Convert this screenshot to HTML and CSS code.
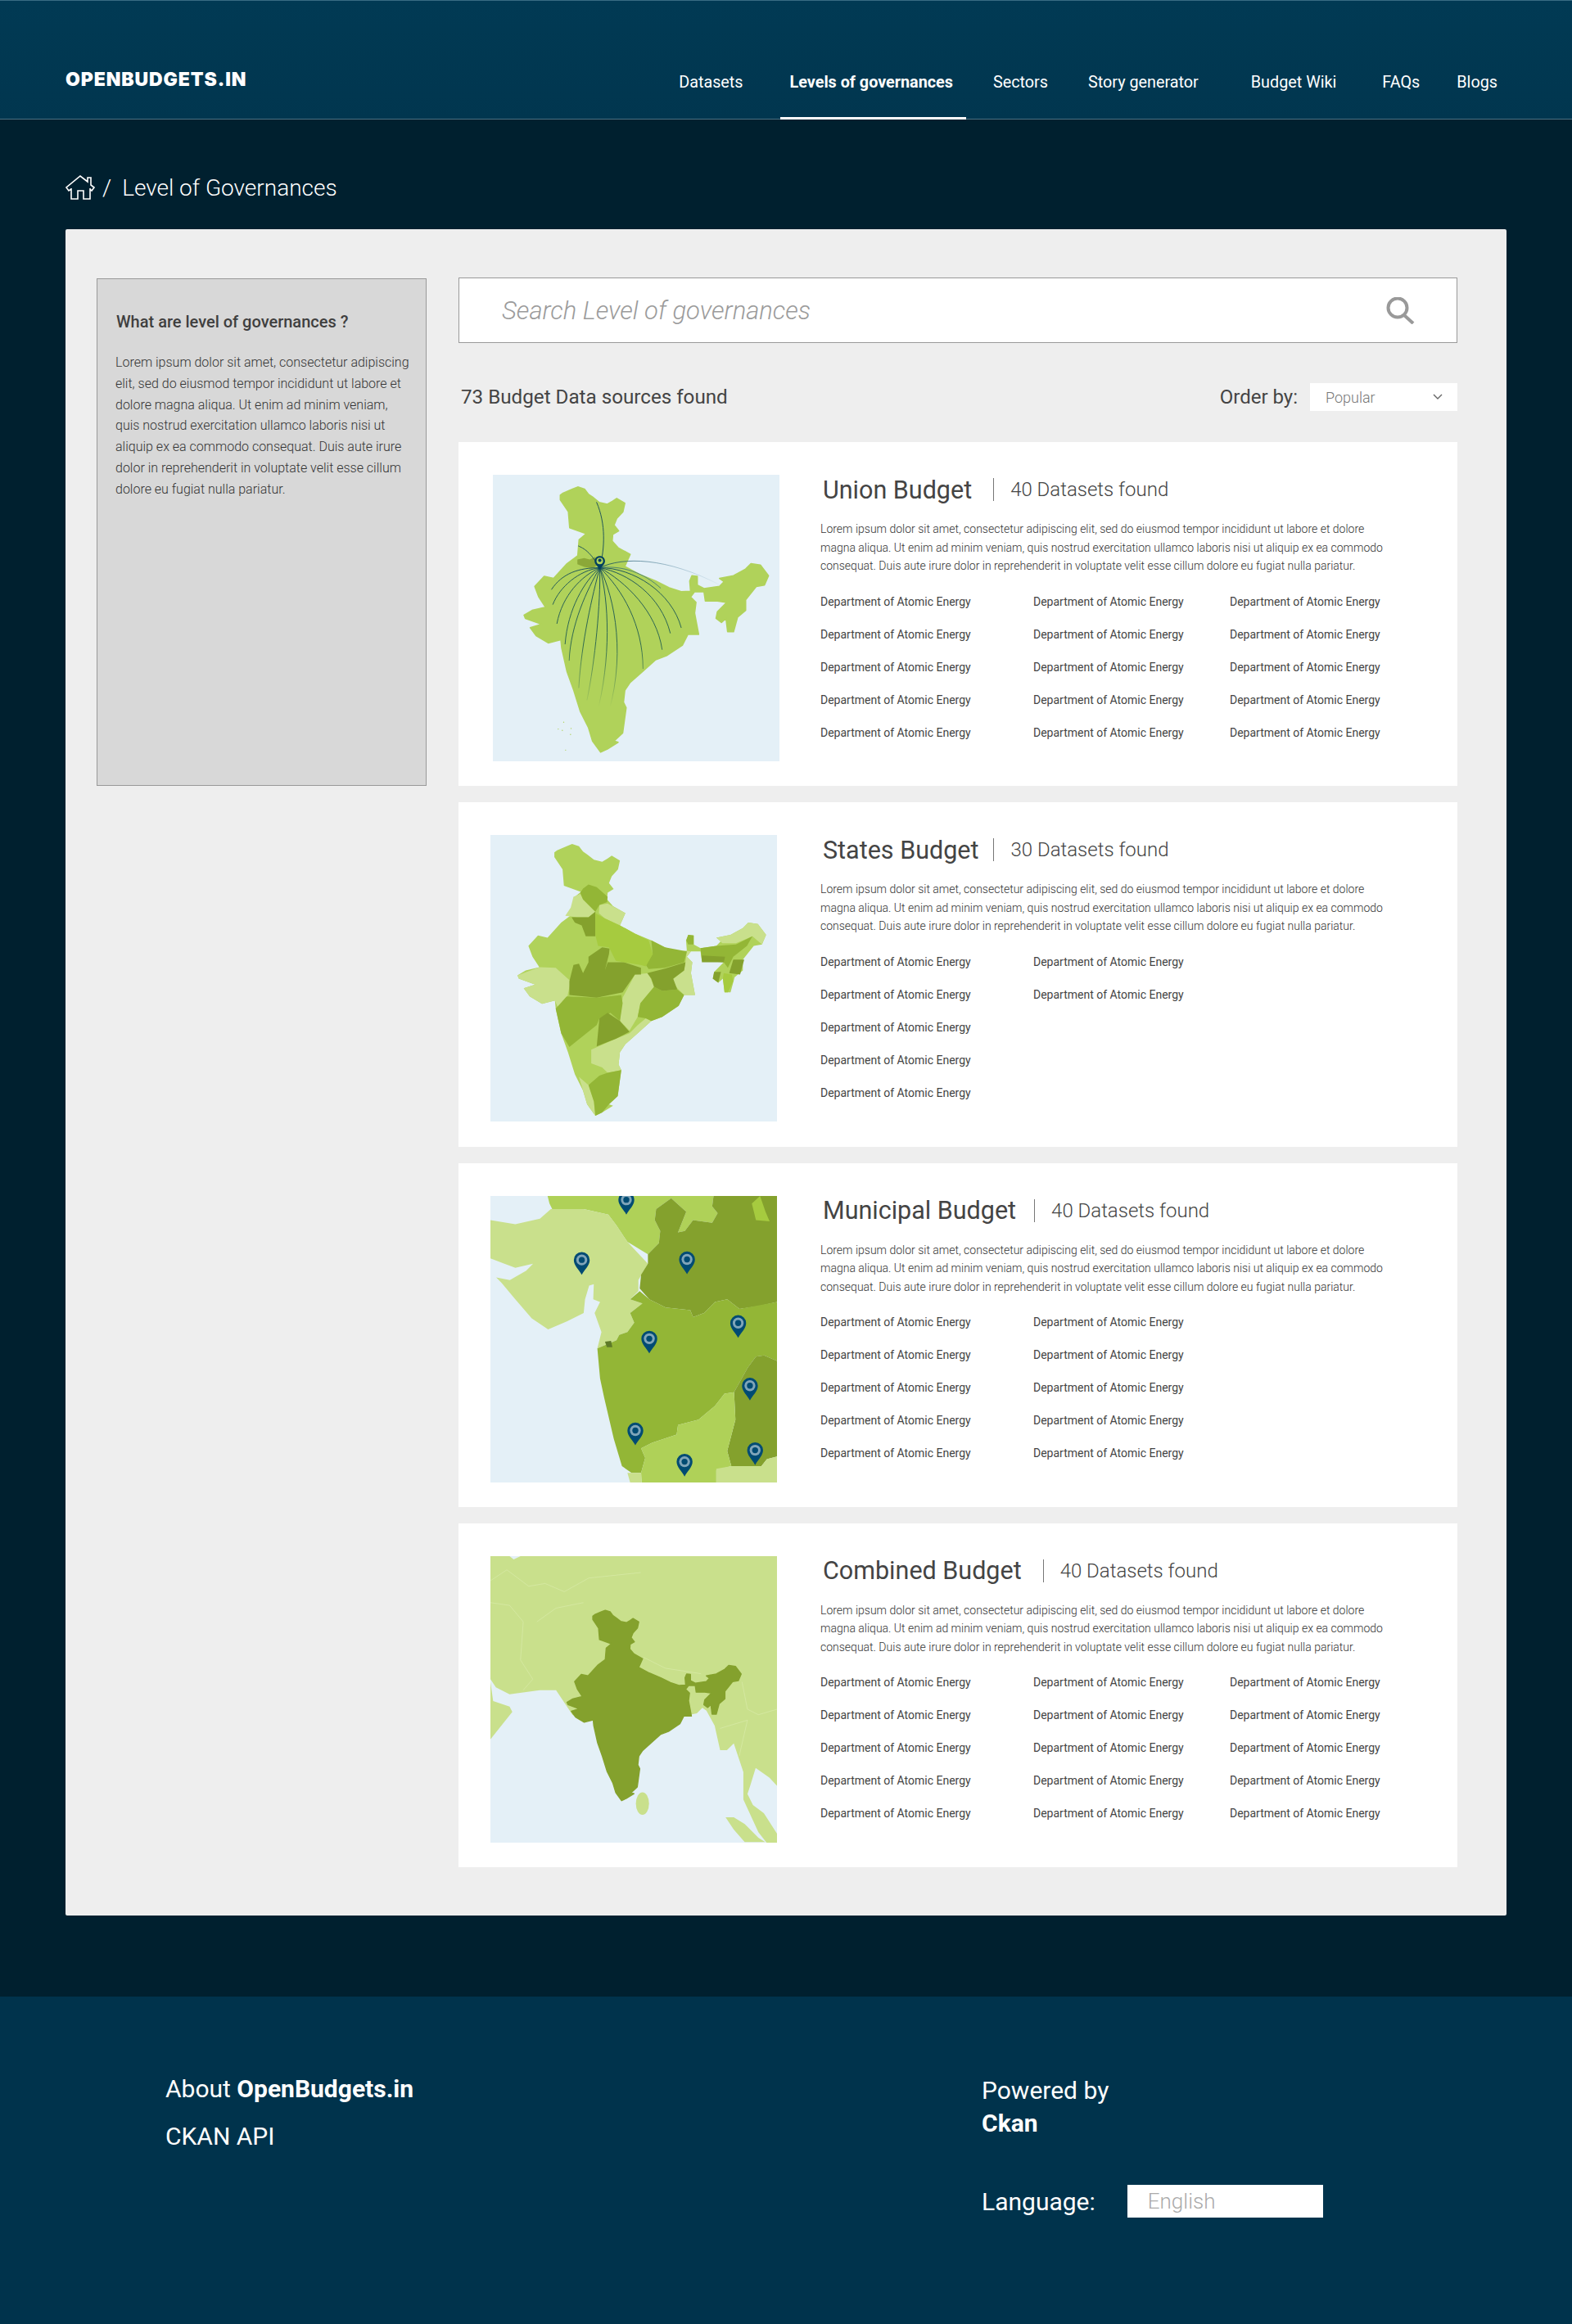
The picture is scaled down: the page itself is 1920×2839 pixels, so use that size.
FILE: index.html
```html
<!DOCTYPE html>
<html lang="en">
<head>
    <meta charset="UTF-8">
    <meta name="viewport" content="width=device-width, initial-scale=1.0">
    <title>Level of Governances</title>
    <link rel="stylesheet" href="styles.css">
</head>
<body>
    <!-- shared map shapes -->
    <svg class="defs" width="0" height="0">
        <defs>
            <path id="india" d="M295 128 305 120 340 105 360 97 385 105 400 125 415 135 440 155 470 162 490 150 505 140 535 158 528 190 505 215 495 240 512 262 490 275 488 300 510 325 555 350 535 395 590 425 650 450 700 475 745 490 780 488 777 450 785 430 805 432 805 465 830 478 888 470 905 452 888 440 940 430 985 405 1005 385 1040 390 1070 430 1055 465 1025 470 985 520 985 560 955 585 940 640 918 640 912 590 895 605 875 590 880 565 915 530 880 525 835 525 830 490 795 490 780 510 800 530 795 570 810 650 770 650 750 690 690 730 650 745 600 790 555 830 535 860 530 905 540 925 527 1020 495 1050 510 1055 470 1080 445 1092 415 1050 400 1000 370 940 345 860 320 790 300 700 297 670 250 682 205 655 183 625 225 612 165 590 160 578 190 560 240 548 215 510 200 470 235 432 270 440 320 385 360 355 365 295 392 272 330 250 325 190 295 145Z"/>
            <g id="pin">
                <path d="M0 0a29 29 0 0 1 29 29c0 20-19 35-29 54-10-19-29-34-29-54A29 29 0 0 1 0 0z" fill="#004b73"/>
                <circle cy="29" r="20" fill="#fff" fill-opacity=".5"/>
                <circle cy="29" r="11" fill="#004b73"/>
            </g>
            <linearGradient id="fade" gradientUnits="userSpaceOnUse" x1="0" y1="490" x2="0" y2="1000">
                <stop offset="0" stop-color="#0b4558"/>
                <stop offset=".55" stop-color="#1c5a4c"/>
                <stop offset="1" stop-color="#1c5a4c" stop-opacity="0"/>
            </linearGradient>
            <linearGradient id="fadeEast" gradientUnits="userSpaceOnUse" x1="517" y1="0" x2="980" y2="0">
                <stop offset="0" stop-color="#0b4558"/>
                <stop offset="1" stop-color="#4d87a8" stop-opacity="0"/>
            </linearGradient>
        </defs>
    </svg>

    <header class="topbar">
        <a class="logo" href="#">OPENBUDGETS.IN</a>
        <nav class="nav">
            <a href="#">Datasets</a>
            <a class="active" href="#">Levels of governances</a>
            <a href="#">Sectors</a>
            <a href="#">Story generator</a>
            <a href="#">Budget Wiki</a>
            <a href="#">FAQs</a>
            <a href="#">Blogs</a>
        </nav>
    </header>

    <main class="main">
        <div class="crumbs">
            <svg class="home-icon" viewBox="0 0 36 30" width="36" height="30">
                <path d="M7 16v13h8V19h7v10h8V16M7 17l-3 2-3-4L18 1l9 7V3h4v9l4 3-3 4-2-2"/>
            </svg>
            <span class="crumb-sep">/</span>
            <span>Level of Governances</span>
        </div>

        <div class="panel">
            <aside class="sidebar">
                <h4>What are level of governances ?</h4>
                <p>Lorem ipsum dolor sit amet, consectetur adipiscing elit, sed do eiusmod tempor incididunt ut labore et dolore magna aliqua. Ut enim ad minim veniam, quis nostrud exercitation ullamco laboris nisi ut aliquip ex ea commodo consequat. Duis aute irure dolor in reprehenderit in voluptate velit esse cillum dolore eu fugiat nulla pariatur.</p>
            </aside>

            <section class="content">
                <div class="search">
                    <span>Search Level of governances</span>
                    <svg viewBox="0 0 36 33" width="36" height="33">
                        <circle cx="14" cy="13" r="11.5"/>
                        <path d="M22 22l11 10"/>
                    </svg>
                </div>

                <div class="toolbar">
                    <span class="count">73 Budget Data sources found</span>
                    <div class="order">
                        <span>Order by:</span>
                        <div class="select">
                            <span>Popular</span>
                            <svg viewBox="0 0 12 8" width="12" height="8"><path d="M1 1l5 5 5-5"/></svg>
                        </div>
                    </div>
                </div>

                <article class="card">
                    <svg class="map map-first" viewBox="126 150 1048 1048">
                        <rect x="126" y="150" width="1048" height="1048" fill="#e4f0f7"/>
                        <use href="#india" transform="translate(83 100) scale(.982 .975)" fill="#b0d25a" stroke="#b0d25a" stroke-width="5" stroke-linejoin="round"/>
                        <path d="M435 460l25-5 20 5 20-10 10 30-20 12-30-5-25-10z" fill="#8ba838"/>
                        <g fill="none" stroke="url(#fade)" stroke-width="2.6">
                            <path d="M517 490C535 420 540 330 505 250"/>
                            <path d="M517 490C480 430 460 420 438 410"/>
                            <path d="M517 490C440 490 380 510 340 570"/>
                            <path d="M517 490C440 500 370 560 345 625"/>
                            <path d="M517 490C450 520 380 590 360 695"/>
                            <path d="M517 490C460 540 400 640 390 770"/>
                            <path d="M517 490C470 570 410 700 405 830"/>
                            <path d="M517 490C490 590 450 760 440 930"/>
                            <path d="M517 490C520 620 500 830 470 975"/>
                            <path d="M517 490C550 610 560 820 505 1030"/>
                            <path d="M517 490C570 600 620 820 535 1065"/>
                            <path d="M517 490C600 570 675 700 675 860"/>
                            <path d="M517 490C610 540 725 650 745 790"/>
                            <path d="M517 490C620 510 740 590 775 730"/>
                            <path d="M517 490C640 490 780 580 815 710"/>
                        </g>
                        <path d="M517 490C600 450 760 450 960 555" fill="none" stroke="url(#fadeEast)" stroke-width="2.6"/>
                        <path d="M517 490C600 480 680 510 740 565" fill="none" stroke="#1b5b78" stroke-width="2.4" opacity=".8"/>
                        <g fill="#b0d25a">
                            <circle cx="385" cy="1055" r="2"/><circle cx="365" cy="1080" r="2"/><circle cx="380" cy="1085" r="2"/>
                            <circle cx="410" cy="1100" r="2"/><circle cx="392" cy="1157" r="2"/><circle cx="412" cy="1078" r="2"/>
                        </g>
                        <path d="M517 447c11 0 19 8 19 19 0 12-12 18-19 31-7-13-19-19-19-31 0-11 8-19 19-19z" fill="#003f60"/>
                        <circle cx="517" cy="465" r="12" fill="#b0d25a"/>
                        <circle cx="517" cy="463" r="6" fill="#003f60"/>
                    </svg>
                    <div class="card-body">
                        <div class="card-head">
                            <h3>Union Budget</h3>
                            <span>40 Datasets found</span>
                        </div>
                        <p>Lorem ipsum dolor sit amet, consectetur adipiscing elit, sed do eiusmod tempor incididunt ut labore et dolore magna aliqua. Ut enim ad minim veniam, quis nostrud exercitation ullamco laboris nisi ut aliquip ex ea commodo consequat. Duis aute irure dolor in reprehenderit in voluptate velit esse cillum dolore eu fugiat nulla pariatur.</p>
                        <div class="depts">
                            <a href="#">Department of Atomic Energy</a><a href="#">Department of Atomic Energy</a><a href="#">Department of Atomic Energy</a><a href="#">Department of Atomic Energy</a><a href="#">Department of Atomic Energy</a>
                            <a href="#">Department of Atomic Energy</a><a href="#">Department of Atomic Energy</a><a href="#">Department of Atomic Energy</a><a href="#">Department of Atomic Energy</a><a href="#">Department of Atomic Energy</a>
                            <a href="#">Department of Atomic Energy</a><a href="#">Department of Atomic Energy</a><a href="#">Department of Atomic Energy</a><a href="#">Department of Atomic Energy</a><a href="#">Department of Atomic Energy</a>
                        </div>
                    </div>
                </article>

                <article class="card">
                    <svg class="map" viewBox="61 64 1049 1049">
                        <rect x="61" y="64" width="1049" height="1049" fill="#e4f0f7"/>
                        <use href="#india" fill="#b0d25a"/>
                        <g fill="#c9e08c">
                            <path d="M365 290 390 280 400 300 445 345 420 365 380 365 335 360 355 330Z"/>
                            <path d="M460 320 490 315 555 350 535 395 480 370 458 350Z"/>
                            <path d="M780 488 795 490 780 510 800 530 795 570 810 650 770 650 745 625 725 595 770 560 775 530Z"/>
                            <path d="M590 575 640 570 660 620 610 680 600 730 570 780 535 745 545 660Z"/>
                            <path d="M160 578 240 548 300 550 355 600 335 690 310 700 297 670 250 682 205 655 183 625 225 612 165 590Z"/>
                            <path d="M570 790 600 760 630 735 650 745 600 790 555 830 535 860 530 905 540 925 490 935 470 915 430 900 430 850 520 810Z"/>
                            <path d="M385 950 420 980 440 1040 445 1092 415 1050 400 1000Z"/>
                            <path d="M888 440 940 430 985 405 1005 385 1040 390 1070 430 1055 465 1020 435 960 460 910 460Z"/>
                        </g>
                        <g fill="#93b636">
                            <path d="M400 260 420 245 450 255 490 290 488 310 460 320 445 345 400 300 390 275Z"/>
                            <path d="M650 450 700 475 780 490 770 530 700 550 640 555 630 540 655 500Z"/>
                            <path d="M610 680 660 620 690 635 745 630 770 650 750 690 690 730 650 745 630 735 600 730Z"/>
                            <path d="M300 700 340 655 450 660 540 650 545 680 535 745 500 715 460 735 450 760 350 840 320 790Z"/>
                            <path d="M420 980 460 945 490 935 540 925 527 1020 495 1050 470 1080 445 1092 440 1040Z"/>
                            <path d="M830 478 888 470 960 465 1020 435 1000 470 950 510 930 550 915 530 835 525Z"/>
                            <path d="M778 450 785 430 805 432 805 465 785 465Z"/>
                        </g>
                        <g fill="#84a12d">
                            <path d="M358 365 420 365 445 345 445 435 410 435 395 395 370 385Z"/>
                            <path d="M635 570 700 553 775 530 770 560 730 590 745 630 690 635 660 620 650 590Z"/>
                            <path d="M365 540 385 535 400 570 420 530 420 510 470 475 497 480 495 500 480 560 490 530 550 530 612 550 612 575 590 575 545 640 450 660 350 650 350 600Z"/>
                            <path d="M460 735 490 715 535 745 570 785 520 810 450 838Z"/>
                            <path d="M835 505 920 510 915 530 835 530Z"/>
                            <path d="M950 520 990 520 975 575 935 570Z"/>
                            <path d="M880 565 905 565 895 605 875 590Z"/>
                        </g>
                        <path d="M445 350 480 370 535 395 590 425 640 450 655 500 630 545 610 540 520 525 495 475 455 470 445 430ZM915 570 945 575 950 600 930 640 918 640 912 590Z" fill="#a6cb3f"/>
                    </svg>
                    <div class="card-body">
                        <div class="card-head head-states">
                            <h3>States Budget</h3>
                            <span>30 Datasets found</span>
                        </div>
                        <p>Lorem ipsum dolor sit amet, consectetur adipiscing elit, sed do eiusmod tempor incididunt ut labore et dolore magna aliqua. Ut enim ad minim veniam, quis nostrud exercitation ullamco laboris nisi ut aliquip ex ea commodo consequat. Duis aute irure dolor in reprehenderit in voluptate velit esse cillum dolore eu fugiat nulla pariatur.</p>
                        <div class="depts">
                            <a href="#">Department of Atomic Energy</a><a href="#">Department of Atomic Energy</a><a href="#">Department of Atomic Energy</a><a href="#">Department of Atomic Energy</a><a href="#">Department of Atomic Energy</a>
                            <a href="#">Department of Atomic Energy</a><a href="#">Department of Atomic Energy</a>
                        </div>
                    </div>
                </article>

                <article class="card">
                    <svg class="map" viewBox="59 62 1048 1048">
                        <rect x="59" y="62" width="1048" height="1048" fill="#e4f0f7"/>
                        <path d="M268 62H875L870 100 890 125 870 160 800 150 770 190 745 195 775 120 720 70 665 110 660 150 680 190 675 235 635 275 560 230 520 170 490 130 400 110 285 110 275 90Z" fill="#afd158"/>
                        <path d="M59 150 150 165 240 145 280 110 400 110 490 130 520 170 560 230 635 310 600 370 600 410 570 440 615 455 570 490 585 525 560 560 530 570 520 590 450 620 465 560 440 490 460 450 435 440 437 385 420 390 405 440 400 490 340 520 270 550 210 510 150 440 100 380 80 360 130 370 190 335 215 310 150 325 110 310 59 290Z" fill="#c9e08c"/>
                        <path d="M875 62H1107V450L1040 465 970 475 925 440 880 450 840 490 800 505 790 480 700 470 640 440 605 400 610 350 635 310 635 275 675 235 680 190 660 150 665 110 720 70 775 120 745 195 770 190 800 150 870 160 890 125 870 100Z" fill="#84a12d"/>
                        <path d="M1015 90 1045 62 1065 120 1080 155 1030 150Z" fill="#a6cb3f"/>
                        <path d="M450 620 520 590 530 570 560 560 585 525 570 490 615 455 570 440 605 410 640 440 700 470 790 480 800 505 840 490 880 450 925 440 970 475 1107 450V665L1060 645 1030 650 1000 690 950 780 915 785 880 830 820 880 745 900 740 935 650 965 610 985 625 1020 610 1075 575 1075 540 1050 510 950 475 800 460 730Z" fill="#93b636"/>
                        <path d="M950 780 1000 690 1030 650 1060 645 1107 665V1015L1070 1025 1050 1050 940 1050 925 995 955 880Z" fill="#84a12d"/>
                        <path d="M610 985 650 965 740 935 745 900 820 880 880 830 915 785 950 780 955 880 925 995 940 1050 885 1065V1110H612L610 1075 625 1020Z" fill="#afd158"/>
                        <path d="M885 1110V1060L940 1050H1050L1070 1025 1107 1015V1110ZM560 1075H610L612 1110H570Z" fill="#c9e08c"/>
                        <path d="M478 595 500 592 505 615 485 615Z" fill="#5e7a28"/>
                        <use href="#pin" x="556" y="47"/>
                        <use href="#pin" x="393" y="267"/>
                        <use href="#pin" x="778" y="265"/>
                        <use href="#pin" x="965" y="498"/>
                        <use href="#pin" x="640" y="555"/>
                        <use href="#pin" x="1008" y="727"/>
                        <use href="#pin" x="589" y="891"/>
                        <use href="#pin" x="769" y="1005"/>
                        <use href="#pin" x="1027" y="963"/>
                    </svg>
                    <div class="card-body">
                        <div class="card-head head-municipal">
                            <h3>Municipal Budget</h3>
                            <span>40 Datasets found</span>
                        </div>
                        <p>Lorem ipsum dolor sit amet, consectetur adipiscing elit, sed do eiusmod tempor incididunt ut labore et dolore magna aliqua. Ut enim ad minim veniam, quis nostrud exercitation ullamco laboris nisi ut aliquip ex ea commodo consequat. Duis aute irure dolor in reprehenderit in voluptate velit esse cillum dolore eu fugiat nulla pariatur.</p>
                        <div class="depts">
                            <a href="#">Department of Atomic Energy</a><a href="#">Department of Atomic Energy</a><a href="#">Department of Atomic Energy</a><a href="#">Department of Atomic Energy</a><a href="#">Department of Atomic Energy</a>
                            <a href="#">Department of Atomic Energy</a><a href="#">Department of Atomic Energy</a><a href="#">Department of Atomic Energy</a><a href="#">Department of Atomic Energy</a><a href="#">Department of Atomic Energy</a>
                        </div>
                    </div>
                </article>

                <article class="card">
                    <svg class="map" viewBox="60 60 1048 1048">
                        <rect x="60" y="60" width="1048" height="1048" fill="#e4f0f7"/>
                        <g fill="#c9e08c">
                            <path d="M60 60H130L145 72 170 60H1108V900L1080 870 1030 835 1010 900 1000 930 1020 970 1060 1000 1108 1075V1108H1070L1040 1070 985 950 985 850 950 745 925 770 900 770 880 680 850 625 835 615 815 635 790 640 440 660 400 660 360 640 330 595 300 550 240 550 130 565 80 540 60 510Z"/>
                            <path d="M60 520 70 590 130 610 140 630 100 680 60 730Z"/>
                            <path d="M920 1015 950 1015 990 1040 1040 1090 1065 1106H990L950 1060Z"/>
                            <ellipse cx="616" cy="965" rx="24" ry="41"/>
                        </g>
                        <g fill="none" stroke="#d9ebaa" stroke-width="2">
                            <path d="M60 150 120 110 200 170 260 160 330 190 420 140 610 120M60 230 130 240 180 300 170 440 215 510 180 550M400 230 300 250 230 300M620 430 700 470 830 490M980 520 1000 620 1040 640 1108 620M900 690 1000 660 970 790"/>
                        </g>
                        <use href="#india" transform="translate(228 190) scale(.7)" fill="#84a12d" stroke="#84a12d" stroke-width="6" stroke-linejoin="round"/>
                    </svg>
                    <div class="card-body">
                        <div class="card-head">
                            <h3>Combined Budget</h3>
                            <span>40 Datasets found</span>
                        </div>
                        <p>Lorem ipsum dolor sit amet, consectetur adipiscing elit, sed do eiusmod tempor incididunt ut labore et dolore magna aliqua. Ut enim ad minim veniam, quis nostrud exercitation ullamco laboris nisi ut aliquip ex ea commodo consequat. Duis aute irure dolor in reprehenderit in voluptate velit esse cillum dolore eu fugiat nulla pariatur.</p>
                        <div class="depts">
                            <a href="#">Department of Atomic Energy</a><a href="#">Department of Atomic Energy</a><a href="#">Department of Atomic Energy</a><a href="#">Department of Atomic Energy</a><a href="#">Department of Atomic Energy</a>
                            <a href="#">Department of Atomic Energy</a><a href="#">Department of Atomic Energy</a><a href="#">Department of Atomic Energy</a><a href="#">Department of Atomic Energy</a><a href="#">Department of Atomic Energy</a>
                            <a href="#">Department of Atomic Energy</a><a href="#">Department of Atomic Energy</a><a href="#">Department of Atomic Energy</a><a href="#">Department of Atomic Energy</a><a href="#">Department of Atomic Energy</a>
                        </div>
                    </div>
                </article>
            </section>
        </div>
    </main>

    <footer class="footer">
        <div class="footer-col">
            <a class="footer-link" href="#">About <b>OpenBudgets.in</b></a>
            <a class="footer-link" href="#">CKAN API</a>
        </div>
        <div class="footer-col">
            <div class="powered">Powered by<br><b>Ckan</b></div>
            <div class="language">
                <span>Language:</span>
                <div class="language-box">English</div>
            </div>
        </div>
    </footer>
</body>
</html>
```

FILE: styles.css
```css
* {
    box-sizing: border-box;
}
body {
    margin: 0;
    font-family: Roboto, "Liberation Sans", sans-serif;
    background-color: #00202f;
    color: #444;
}
a {
    color: inherit;
    text-decoration: none;
}
.defs {
    display: block;
}

/* top bar */
.topbar {
    height: 146px;
    display: flex;
    justify-content: space-between;
    align-items: flex-end;
    padding: 0 91px 0 80px;
    background: linear-gradient(#013a54, #01364f);
    border-top: 1px solid #3a6c84;
    border-bottom: 1px solid #4d7082;
    color: #fff;
}
.logo {
    font-family: Inter, "Liberation Sans", sans-serif;
    font-size: 23px;
    font-weight: 900;
    letter-spacing: .9px;
    line-height: 34px;
    margin-bottom: 31px;
}
.nav {
    display: flex;
}
.nav a {
    display: block;
    font-size: 19.8px;
    line-height: 30px;
    padding-bottom: 29px;
    margin-left: 49px;
}
.nav a.active {
    font-weight: 700;
    margin: 0 -16px -1px 45px;
    padding: 0 16px 27px 12px;
    border-bottom: 3px solid #fff;
}
.nav a:nth-child(5) {
    margin-left: 64px;
}
.nav a:nth-child(6) {
    margin-left: 56px;
}
.nav a:nth-child(7) {
    margin-left: 45px;
}

/* main area */
.main {
    padding: 62px 80px 99px 80px;
    background: #00202f;
}
.crumbs {
    display: flex;
    align-items: center;
    height: 42px;
    margin-bottom: 30px;
    color: #fff;
    font-size: 28px;
    font-weight: 300;
}
.home-icon {
    fill: none;
    stroke: #fff;
    stroke-width: 1.6;
}
.crumb-sep {
    margin: 0 13px 0 9px;
}
.panel {
    display: flex;
    padding: 59px 0 59px 38px;
    background-color: #eee;
    border-radius: 2px;
}
.sidebar {
    width: 403px;
    height: 620px;
    margin: 1px 39px 0 0;
    padding: 38px 15px 0 22px;
    background-color: #d8d8d8;
    border: 1px solid #999;
}
.sidebar h4 {
    margin: 0 0 23px 1px;
    font-size: 20px;
    font-weight: 500;
    line-height: 28px;
    color: #3f3f3f;
}
.sidebar p {
    margin: 0;
    font-size: 16px;
    font-weight: 300;
    line-height: 25.8px;
    color: #333;
}
.content {
    width: 1220px;
}
.search {
    display: flex;
    justify-content: space-between;
    align-items: center;
    height: 80px;
    padding: 0 50px 0 52px;
    background-color: #fff;
    border: 1px solid #999;
    color: #9b9b9b;
    font-size: 31px;
    font-weight: 300;
    font-style: italic;
}
.search svg {
    fill: none;
    stroke: #999;
    stroke-width: 4;
}
.toolbar {
    display: flex;
    justify-content: space-between;
    align-items: center;
    height: 34px;
    margin: 49px 0 38px;
    padding-left: 3px;
    font-size: 24px;
}
.count {
    font-size: 24.2px;
}
.order {
    display: flex;
    align-items: center;
    gap: 15px;
}
.select {
    display: flex;
    justify-content: space-between;
    align-items: center;
    width: 180px;
    height: 34px;
    padding: 0 18px 0 19px;
    background-color: #fff;
    color: #777;
    font-size: 18px;
    font-weight: 300;
}
.select svg {
    fill: none;
    stroke: #666;
    stroke-width: 1.4;
}

/* budget cards */
.card {
    display: flex;
    height: 420.33px;
    margin-bottom: 20px;
    padding: 40px 0 0 39px;
    background-color: #fff;
}
.card:last-child {
    margin-bottom: 0;
}
.map {
    flex: none;
    width: 350px;
    height: 350px;
    display: block;
}
.map-first {
    margin-left: 3px;
}
.map-first + .card-body {
    margin-left: 50px;
}
.card-body {
    margin-left: 53px;
    width: 760px;
}
.card-head {
    display: flex;
    align-items: center;
    height: 36px;
    margin-left: 3px;
    font-size: 24px;
    font-weight: 300;
}
.card-head h3 {
    margin: 0 26px 0 0;
    font-size: 30.5px;
    font-weight: 400;
    color: #444;
}
.card-head.head-states h3 {
    margin-right: 18px;
}
.card-head.head-municipal h3 {
    margin-right: 22px;
}
.card-head span {
    padding-left: 20px;
    border-left: 1px solid #777;
    line-height: 28px;
}
.card-body p {
    margin: 19px 0 0;
    width: 700px;
    font-size: 14px;
    font-weight: 300;
    line-height: 22.5px;
    color: #333;
}
.depts {
    display: grid;
    grid-auto-flow: column;
    grid-template-rows: repeat(5, 40px);
    grid-template-columns: 260px 240px 240px;
    margin-top: 12px;
    font-size: 14px;
    line-height: 40px;
    color: #444;
}

/* footer */
.footer {
    display: flex;
    height: 400px;
    padding: 95px 0 0 202px;
    background-color: #00334c;
    color: #fff;
    font-size: 30px;
}
.footer-col {
    width: 997px;
}
.footer-col + .footer-col {
    width: auto;
}
.footer-col b {
    font-weight: 700;
}
.footer-link {
    display: block;
    line-height: 36px;
    margin-bottom: 22px;
}
.powered {
    line-height: 40px;
}
.language {
    display: flex;
    align-items: center;
    gap: 39px;
    margin-top: 55px;
}
.language-box {
    width: 239px;
    height: 40px;
    padding-left: 25px;
    background-color: #fff;
    color: #aaa;
    font-size: 26px;
    font-weight: 300;
    line-height: 40px;
}
```
